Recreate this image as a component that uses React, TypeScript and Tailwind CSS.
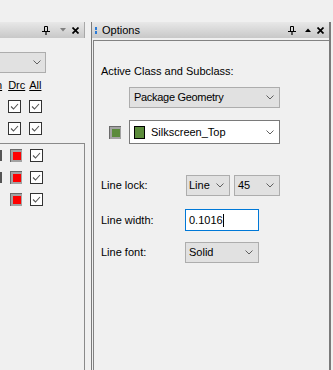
import React from 'react';

const Chevron = () => (
  <svg width="8" height="5" viewBox="0 0 8 5" className="shrink-0">
    <path d="M0.5 0.5L4 4L7.5 0.5" fill="none" stroke="#606060" strokeWidth="1" />
  </svg>
);

const Pin = () => (
  <svg width="8" height="9" viewBox="0 0 8 9" className="shrink-0">
    <path d="M2.5 0.5h3v5h-3z" fill="none" stroke="#000" />
    <path d="M0 5.5h8" stroke="#000" />
    <path d="M4 6v3" stroke="#000" strokeWidth="1.2" />
  </svg>
);

const Close = () => (
  <svg width="7" height="7" viewBox="0 0 7 7" className="shrink-0">
    <path d="M0.5 0.5L6.5 6.5M6.5 0.5L0.5 6.5" stroke="#000" strokeWidth="1.7" />
  </svg>
);

const Tri = ({ up, color }: { up?: boolean; color: string }) => (
  <svg width="6" height="4" viewBox="0 0 6 4" className="shrink-0">
    <polygon points={up ? '0,4 3,0.5 6,4' : '0,0 3,3.5 6,0'} fill={color} />
  </svg>
);

const Check = () => (
  <div className="w-[13px] h-[13px] border border-[#333] bg-white shrink-0">
    <svg width="11" height="11" viewBox="0 0 11 11">
      <path d="M2 5.5L4.5 8L9 3" fill="none" stroke="#555" strokeWidth="1.1" />
    </svg>
  </div>
);

const Swatch = ({ color }: { color: string }) => (
  <div className="w-[12px] h-[13px] bg-[#a3a3a3] border-t border-l border-[#6a6a6a] pl-[2px] pt-[2px] shrink-0">
    <div className="w-[8px] h-[8px]" style={{ background: color }} />
  </div>
);

export default function App() {
  return (
    <div className="w-[333px] h-[370px] bg-[#f0f0f0] flex pt-[22px] overflow-hidden text-[11px] leading-[13px] text-black font-['Liberation_Sans',Arial,sans-serif]">
      {/* left panel (cut off) */}
      <div className="w-[85px] flex flex-col shrink-0">
        <div className="h-[16px] w-[85px] flex items-center bg-gradient-to-b from-[#e8e8e8] to-[#c8c8c8] border-r border-[#a8a8a8]">
          <div className="ml-[42px]"><Pin /></div>
          <div className="ml-[10px]"><Tri color="#808080" /></div>
          <div className="ml-[6px]"><Close /></div>
        </div>

        <div className="mt-[14px] h-[21px] w-[46px] border border-l-0 border-[#adadad] bg-[#e1e1e1] flex items-center justify-end pr-[4px]">
          <Chevron />
        </div>

        <div className="mt-[6px] flex">
          <span className="underline -ml-[4px]">n</span>
          <span className="underline ml-[6px]">Drc</span>
          <span className="underline ml-[4px]">All</span>
        </div>

        <div className="mt-[8px] flex gap-[8px] ml-[8px]">
          <Check />
          <Check />
        </div>
        <div className="mt-[9px] flex gap-[8px] ml-[8px]">
          <Check />
          <Check />
        </div>

        <div className="mt-[8px] flex-1 border-t border-r border-[#8a8a8a] pt-[5px] flex flex-col gap-[9px]">
          {[true, true, false].map((edge, i) => (
            <div key={i} className="flex items-center h-[13px]">
              <div className={`w-[2px] h-[11px] ${edge ? 'bg-[#555]' : ''}`} />
              <div className="ml-[8px]"><Swatch color="#ff0000" /></div>
              <div className="ml-[8px]"><Check /></div>
            </div>
          ))}
        </div>
      </div>

      {/* Options panel */}
      <div className="ml-[6px] w-[240px] flex flex-col border-l border-r-2 border-[#7a7a7a] shrink-0">
        <div className="h-[16px] flex items-center bg-gradient-to-b from-[#e8e8e8] to-[#c8c8c8]">
          <div className="ml-[3px] flex flex-col gap-[1px]">
            <div className="w-[2px] h-[3px] bg-[#2b7bd6]" />
            <div className="w-[2px] h-[3px] bg-[#2b7bd6]" />
          </div>
          <span className="ml-[5px]">Options</span>
          <div className="ml-auto flex items-center">
            <Pin />
            <div className="ml-[9px]"><Tri up color="#000" /></div>
            <div className="ml-[6px] mr-[5px]"><Close /></div>
          </div>
        </div>

        <div className="mt-[2px] ml-[1px] flex-1 border-t border-l border-[#828282] pl-[7px] flex flex-col">
          <div className="mt-[24px]">Active Class and Subclass:</div>

          <div className="mt-[9px] ml-[28px] w-[151px] h-[21px] border border-[#adadad] bg-[#e1e1e1] flex items-center pl-[4px] pr-[5px]">
            <span className="flex-1 tracking-[-0.3px]">Package Geometry</span>
            <Chevron />
          </div>

          <div className="mt-[12px] h-[24px] flex items-center">
            <div className="ml-[8px]"><Swatch color="#5b8b3b" /></div>
            <div className="ml-[8px] w-[151px] h-[24px] border border-[#7a7a7a] bg-white flex items-center pl-[4px] pr-[5px]">
              <div className="w-[11px] h-[13px] border border-black bg-[#5b8b3b]" />
              <span className="ml-[6px] flex-1">Silkscreen_Top</span>
              <Chevron />
            </div>
          </div>

          <div className="mt-[31px] h-[21px] flex items-center">
            <span className="w-[85px]">Line lock:</span>
            <div className="w-[44px] h-[21px] border border-[#adadad] bg-[#e1e1e1] flex items-center pl-[2px] pr-[5px]">
              <span className="flex-1">Line</span>
              <Chevron />
            </div>
            <div className="ml-[4px] w-[46px] h-[21px] border border-[#adadad] bg-[#e1e1e1] flex items-center pl-[3px] pr-[5px]">
              <span className="flex-1">45</span>
              <Chevron />
            </div>
          </div>

          <div className="mt-[13px] h-[22px] flex items-center">
            <span className="w-[84px]">Line width:</span>
            <div className="w-[74px] h-[22px] border border-[#0078d7] bg-white flex items-center pl-[3px]">
              <span>0.1016</span>
              <div className="w-px h-[13px] bg-black" />
            </div>
          </div>

          <div className="mt-[11px] h-[21px] flex items-center">
            <span className="w-[84px]">Line font:</span>
            <div className="w-[74px] h-[21px] border border-[#adadad] bg-[#e1e1e1] flex items-center pl-[3px] pr-[5px]">
              <span className="flex-1">Solid</span>
              <Chevron />
            </div>
          </div>
        </div>
      </div>
    </div>
  );
}
